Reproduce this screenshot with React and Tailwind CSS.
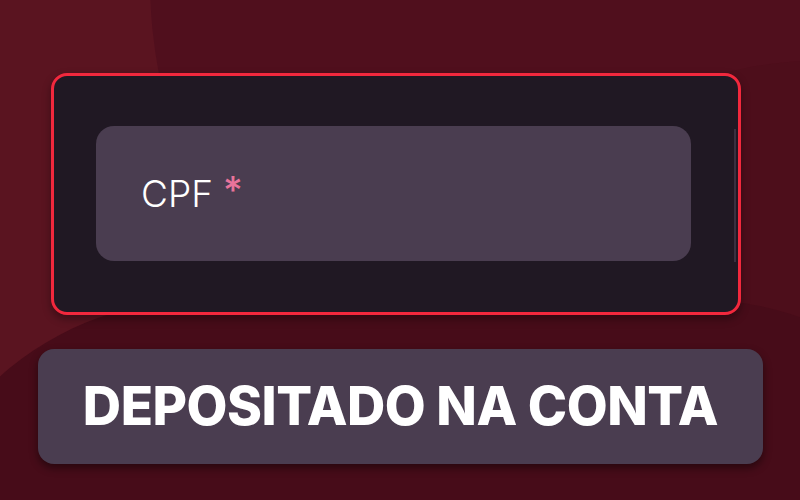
export default function App() {
  return (
    <div className="relative w-[800px] h-[500px] overflow-hidden bg-[#4f0e1c]" style={{ fontFamily: "Poppins, Inter, 'Noto Sans', sans-serif" }}>
      <div className="absolute -left-[300px] -top-[600px] w-[1200px] h-[1100px] rounded-full bg-[#5a1420]" />
      <div className="absolute left-[150px] -top-[520px] w-[1300px] h-[1000px] rounded-full bg-[#500f1d]" />
      <div className="absolute left-[380px] top-[60px] w-[900px] h-[900px] rounded-full bg-[#4d0e1b]" />
      <div className="absolute -left-[100px] top-[300px] w-[1100px] h-[600px] rounded-full bg-[#470c19]" />
      <div className="relative flex flex-col pt-[73px] px-[38px]">
        <div className="mx-[13px] w-[690px] h-[242px] rounded-[16px] border-[3px] border-[#f2283d] bg-[#201823] shadow-[0_4px_8px_rgba(0,0,0,0.35)] pt-[50px] pl-[42px] flex">
          <div className="w-[595px] h-[135px] rounded-[18px] bg-[#4a3d50] flex items-center pl-[45px]">
            <span className="text-[37px] leading-none text-white" style={{ fontFamily: "Inter, Roboto, sans-serif", fontWeight: 300 }}>CPF</span>
            <span className="ml-[10px] text-[38px] leading-none text-[#e8739a] -mt-[8px]" style={{ fontFamily: "Inter, sans-serif", fontWeight: 500 }}>*</span>
          </div>
          <div className="ml-[43px] mt-[3px] w-[2px] h-[133px] bg-[#3a3040]" />
        </div>
        <div className="mt-[34px] w-[725px] h-[115px] rounded-[16px] bg-[#4a3d50] shadow-[0_4px_8px_rgba(0,0,0,0.45)] flex items-center justify-center">
          <span className="text-white text-[53px] leading-none tracking-[-0.5px]" style={{ fontFamily: "Inter, sans-serif", fontWeight: 800 }}>DEPOSITADO NA CONTA</span>
        </div>
      </div>
    </div>
  );
}
